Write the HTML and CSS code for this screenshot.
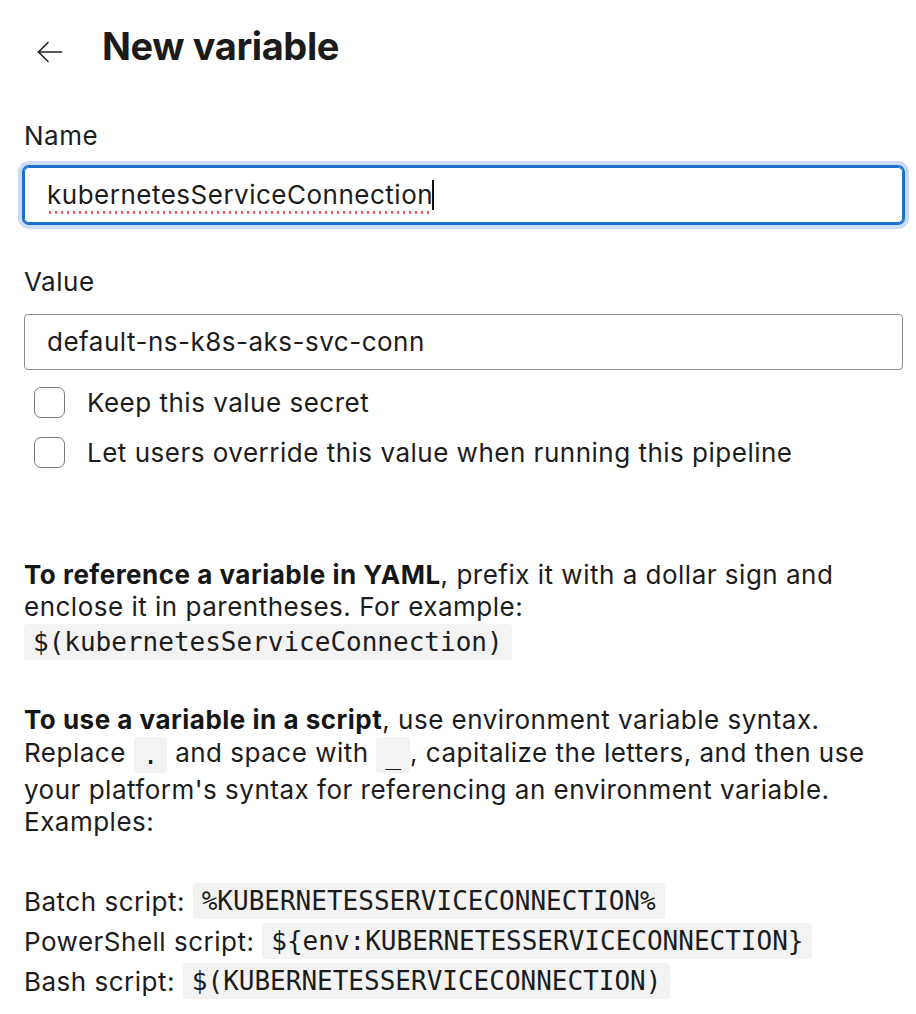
FILE: index.html
```html
<!DOCTYPE html>
<html lang="en">
<head>
<meta charset="utf-8">
<title>New variable</title>
<link rel="stylesheet" href="styles.css">
</head>
<body>
<main class="page">
  <header class="header">
    <button class="back" aria-label="Back">
      <svg width="26" height="22" viewBox="0 0 26 22" fill="none" stroke="#222" stroke-width="1.6" stroke-linecap="round" stroke-linejoin="round">
        <path d="M24.5 11H1.5"/>
        <path d="M11 1.5L1.5 11L11 20.5"/>
      </svg>
    </button>
    <h1 class="title">New variable</h1>
  </header>

  <label class="label label-name">Name</label>
  <div class="field focused"><span class="misspelled">kubernetesServiceConnection</span><span class="caret"></span></div>

  <label class="label label-value">Value</label>
  <div class="field">default-ns-k8s-aks-svc-conn</div>

  <div class="checks">
    <label class="check"><span class="box"></span><span>Keep this value secret</span></label>
    <label class="check"><span class="box"></span><span>Let users override this value when running this pipeline</span></label>
  </div>

  <p class="para para-yaml"><strong>To reference a variable in YAML</strong>, prefix it with a dollar sign and enclose it in parentheses. For example:<br><code>$(kubernetesServiceConnection)</code></p>

  <p class="para para-script"><strong>To use a variable in a script</strong>, use environment variable syntax. Replace <code>.</code> and space with <code>_</code>, capitalize the letters, and then use your platform's syntax for referencing an environment variable. Examples:</p>

  <div class="examples">
    <div class="example">Batch script: <code>%KUBERNETESSERVICECONNECTION%</code></div>
    <div class="example">PowerShell script: <code>${env:KUBERNETESSERVICECONNECTION}</code></div>
    <div class="example">Bash script: <code>$(KUBERNETESSERVICECONNECTION)</code></div>
  </div>
</main>
</body>
</html>
```

FILE: styles.css
```css
* { box-sizing: border-box; }

html, body {
  margin: 0;
  padding: 0;
  background: #ffffff;
}

body {
  font-family: Inter, "Noto Sans", "Liberation Sans", sans-serif;
  font-size: 26px;
  letter-spacing: 0.5px;
  color: #1c1c1c;
}

.page {
  padding: 20px 13px 0 24px;
}

.header {
  display: flex;
  align-items: flex-start;
  height: 52px;
}

.back {
  margin: 21px 0 0 13px;
  padding: 0;
  border: 0;
  background: none;
  width: 26px;
  height: 22px;
  display: flex;
}

.title {
  margin: 0 0 0 39px;
  font-size: 38px;
  line-height: 52px;
  font-weight: 700;
  letter-spacing: -0.4px;
  color: #1b1b1b;
}

.label {
  display: block;
  line-height: 32px;
}

.label-name { margin-top: 48px; }
.label-value { margin-top: 43px; }

.field {
  margin-top: 15px;
  height: 56px;
  border: 1px solid #8d8d8d;
  border-radius: 4px;
  padding: 0 22px;
  display: flex;
  align-items: center;
  line-height: 32px;
}

.field.focused {
  border-color: #1e6fcc;
  box-shadow: 0 0 0 2px #1e6fcc, 0 0 0 6px #c9dcf3;
  border-radius: 5px;
}

.label-value + .field { margin-top: 16px; }

.misspelled {
  position: relative;
}

.misspelled::after {
  content: "";
  position: absolute;
  left: 0;
  right: 0;
  bottom: -3px;
  height: 3px;
  background-image: radial-gradient(circle, #ea5a50 1.1px, transparent 1.5px);
  background-size: 6px 3px;
  background-repeat: repeat-x;
}

.caret {
  display: inline-block;
  width: 2px;
  height: 30px;
  background: #111;
  margin-left: -1px;
}

.checks {
  margin-top: 7px;
}

.check {
  display: flex;
  align-items: center;
  height: 50px;
  padding-left: 10px;
}

.box {
  width: 31px;
  height: 31px;
  border: 1.5px solid #7a7a7a;
  border-radius: 7px;
  margin-right: 22px;
  flex: none;
}

.para {
  margin: 0;
  line-height: 32px;
}

.para strong { font-weight: 700; color: #161616; }

.para-yaml { margin-top: 82px; }
.para-script { margin-top: 43px; }

code {
  font-family: "DejaVu Sans Mono", "Liberation Mono", monospace;
  font-size: 26px;
  letter-spacing: 0;
  display: inline-block;
  line-height: 36px;
  margin: 1px 0;
  padding: 0 9px;
  background: #f3f3f3;
  border-radius: 4px;
  vertical-align: middle;
  color: #1c1c1c;
}

.examples {
  margin-top: 43px;
}

.example {
  height: 40px;
  display: flex;
  align-items: center;
  white-space: pre;
}

.example code { margin: 0; }
```
